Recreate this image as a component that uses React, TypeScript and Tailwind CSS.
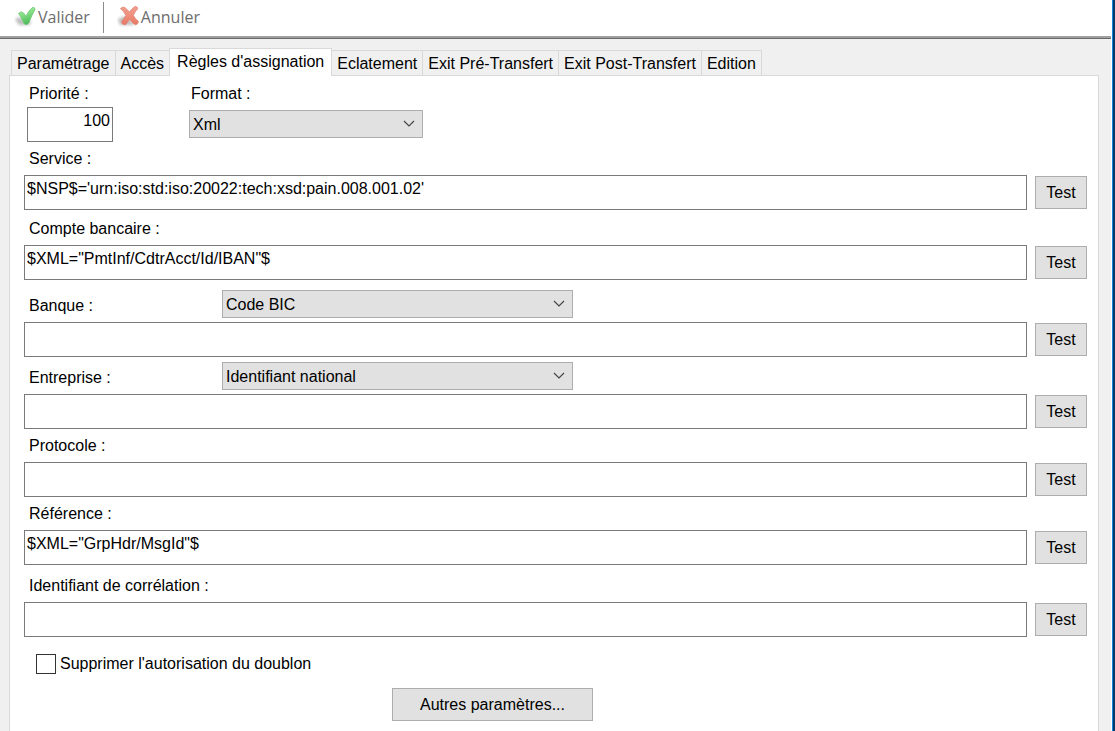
import { useState } from "react"

const TABS = [
  "Paramétrage",
  "Accès",
  "Règles d'assignation",
  "Eclatement",
  "Exit Pré-Transfert",
  "Exit Post-Transfert",
  "Edition",
]

function CheckIcon() {
  return (
    <svg width="24" height="22" viewBox="0 0 24 22" aria-hidden="true">
      <defs>
        <linearGradient id="check-fill" x1="0" y1="0" x2="0.3" y2="1">
          <stop offset="0" stopColor="#b4efab" />
          <stop offset="0.5" stopColor="#7fdc80" />
          <stop offset="1" stopColor="#4fbb5c" />
        </linearGradient>
        <filter id="check-blur" x="-40%" y="-40%" width="180%" height="180%">
          <feGaussianBlur stdDeviation="1.5" />
        </filter>
      </defs>
      <path d="M1 13 L6 11 L12 17 L17 14 L16 19 L5 19 Z" fill="#bdbdbd" filter="url(#check-blur)" />
      <path
        d="M4.500 7.500 Q6.500 5 9 6.500 Q10.800 8 11.800 10.500 Q14.500 4.500 18.500 1.500 Q21 1 21 3.500 Q17.500 9.500 15 16.500 Q13.500 19.300 11 18.500 Q9.500 17.500 8.500 14.500 Q7 10.500 4.500 7.500 Z"
        fill="url(#check-fill)"
        stroke="#6cc673"
        strokeWidth="0.8"
      />
    </svg>
  )
}

function CrossIcon() {
  return (
    <svg width="24" height="22" viewBox="0 0 24 22" aria-hidden="true">
      <defs>
        <linearGradient id="cross-fill" x1="0" y1="0" x2="0" y2="1">
          <stop offset="0" stopColor="#f0a08f" />
          <stop offset="0.5" stopColor="#ee8e7c" />
          <stop offset="1" stopColor="#e67865" />
        </linearGradient>
        <filter id="cross-blur" x="-40%" y="-40%" width="180%" height="180%">
          <feGaussianBlur stdDeviation="1.5" />
        </filter>
      </defs>
      <path d="M1 13 L8 10 L13 15 L19 17 L16 19 L3 19 Z" fill="#bdbdbd" filter="url(#cross-blur)" />
      <path
        d="M3.500 2.500 Q5.500 0.500 8 1.500 L12.500 6 Q15 2.500 18 0.500 Q20.500 0.500 20.800 2.500 Q18 5.500 16.300 9.300 Q18 13 21.500 15.500 Q21 18.500 18.500 18.800 Q15 17 12.800 13.500 Q10.500 16 8.500 18.800 Q5.500 18.800 4.500 16.500 Q6.500 12.500 9 9.500 Q7 5.500 3.500 2.500 Z"
        fill="url(#cross-fill)"
        stroke="#e08070"
        strokeWidth="0.8"
        strokeLinejoin="round"
      />
    </svg>
  )
}

function Toolbar() {
  return (
    <div className="flex h-[39px] items-start border-b border-[#696969] bg-white">
      <div className="flex h-[38px] w-full items-start border-b-2 border-[#a0a0a0] pt-[2px] pl-[14px] font-['Open_Sans',sans-serif] text-base text-[#6d6d6d]">
        <button className="flex h-[30px] items-center">
          <CheckIcon />
          Valider
        </button>
        <div className="mx-[13px] h-[31px] w-px bg-[#8c8c8c]" />
        <button className="flex h-[30px] items-center">
          <CrossIcon />
          Annuler
        </button>
      </div>
    </div>
  )
}

function TabStrip({ active, onSelect }: { active: string; onSelect: (tab: string) => void }) {
  return (
    <div role="tablist" className="flex items-end pl-[2px]">
      {TABS.map((tab) =>
        tab === active ? (
          <button
            key={tab}
            role="tab"
            aria-selected="true"
            className="relative -mb-px -ml-px h-7 border border-b-0 border-[#d9d9d9] bg-white px-[7px] pb-[2px] whitespace-nowrap"
          >
            {tab}
          </button>
        ) : (
          <button
            key={tab}
            role="tab"
            aria-selected="false"
            onClick={() => onSelect(tab)}
            className="h-[25px] border-t border-r border-[#d9d9d9] bg-[#f0f0f0] px-[5px] pt-px whitespace-nowrap first:border-l"
          >
            {tab}
          </button>
        ),
      )}
    </div>
  )
}

type DropDownProps = { id: string; label?: string; options: string[]; className: string }

function DropDown({ id, label, options, className }: DropDownProps) {
  return (
    <div className={`relative h-7 ${className}`}>
      <select
        id={id}
        aria-label={label}
        className="h-full w-full appearance-none border border-[#adadad] bg-[#e1e1e1] pt-[2px] pl-[3px] outline-none"
      >
        {options.map((option) => (
          <option key={option}>{option}</option>
        ))}
      </select>
      <svg
        className="pointer-events-none absolute top-[10px] right-2"
        width="12"
        height="8"
        viewBox="0 0 12 8"
        fill="none"
        stroke="#444"
        strokeWidth="1.2"
        aria-hidden="true"
      >
        <path d="M1 1 L6 6 L11 1" />
      </svg>
    </div>
  )
}

const BUTTON = "h-[33px] border border-[#adadad] bg-[#e1e1e1] active:bg-[#cce4f7]"
const TEXT_BOX = "h-[35px] border border-[#7a7a7a] bg-white px-[2px] pb-2 outline-none"

type RuleProps = {
  id: string
  label: string
  value?: string
  options?: string[]
  className: string
}

function Rule({ id, label, value = "", options, className }: RuleProps) {
  return (
    <div className={className}>
      <div className="mb-1 flex h-7 items-center pl-[5px]">
        <label htmlFor={id} className={options ? "w-[193px] pt-[3px]" : "pt-[3px]"}>
          {label} :
        </label>
        {options && (
          <DropDown id={`${id}-type`} label={`Type ${label}`} options={options} className="w-[351px]" />
        )}
      </div>
      <div className="flex items-center gap-2">
        <input id={id} type="text" defaultValue={value} className={`min-w-0 flex-1 ${TEXT_BOX}`} />
        <button className={`w-[52px] ${BUTTON}`}>Test</button>
      </div>
    </div>
  )
}

export default function App() {
  const [tab, setTab] = useState("Règles d'assignation")

  return (
    <div className="flex min-h-screen bg-[#f0f0f0] font-['Liberation_Sans',Arial,sans-serif] text-base text-black">
      <div className="flex min-w-0 flex-1 flex-col">
        <Toolbar />

        <div className="flex flex-1 flex-col pt-[9px] pr-[12px] pl-[9px]">
          <TabStrip active={tab} onSelect={setTab} />

          <div className="flex-1 border border-b-0 border-[#d9d9d9] bg-white pt-[2px] pr-[11px] pl-[14px]">
            <div className="flex gap-[76px] pl-[3px]">
              <div className="flex w-[86px] flex-col">
                <label htmlFor="priorite" className="flex h-7 items-center pt-[3px] pl-[2px]">
                  Priorité :
                </label>
                <input
                  id="priorite"
                  type="text"
                  defaultValue="100"
                  className={`mt-px w-full text-right ${TEXT_BOX}`}
                />
              </div>
              <div className="flex w-[234px] flex-col">
                <label htmlFor="format" className="flex h-7 items-center pt-[3px] pl-[2px]">
                  Format :
                </label>
                <DropDown id="format" options={["Xml", "Texte"]} className="mt-1" />
              </div>
            </div>

            <Rule
              id="service"
              label="Service"
              value="$NSP$='urn:iso:std:iso:20022:tech:xsd:pain.008.001.02'"
              className="mt-px"
            />
            <Rule
              id="compte"
              label="Compte bancaire"
              value={'$XML="PmtInf/CdtrAcct/Id/IBAN"$'}
              className="mt-[3px]"
            />
            <Rule id="banque" label="Banque" options={["Code BIC"]} className="mt-[10px]" />
            <Rule id="entreprise" label="Entreprise" options={["Identifiant national"]} className="mt-[5px]" />
            <Rule id="protocole" label="Protocole" className="mt-px" />
            <Rule id="reference" label="Référence" value={'$XML="GrpHdr/MsgId"$'} className="mt-px" />
            <Rule id="correlation" label="Identifiant de corrélation" className="mt-[5px]" />

            <label className="mt-[15px] ml-3 flex w-fit items-center gap-1">
              <input
                type="checkbox"
                className="size-5 appearance-none border border-[#333] bg-white checked:bg-[#333]"
              />
              Supprimer l'autorisation du doublon
            </label>

            <button className={`mt-3 mb-[10px] ml-[368px] w-[201px] ${BUTTON}`}>Autres paramètres...</button>
          </div>
        </div>
      </div>

      {/* Window frame */}
      <div className="w-px border-l border-white" />
      <div className="w-[3px] border-l border-[#1883d7] bg-[#003a70]" />
    </div>
  )
}
